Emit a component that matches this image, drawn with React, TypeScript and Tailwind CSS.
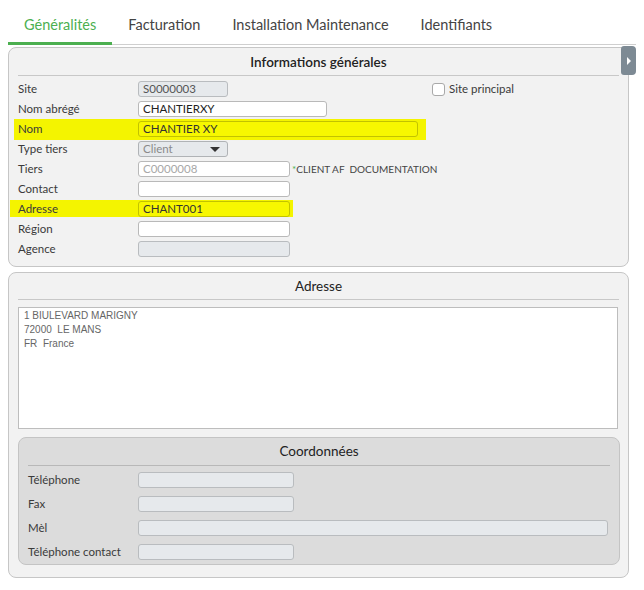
import React from 'react';

type FieldRow = {
  label: string;
  value?: string;
  width: number;
  kind?: 'readonly' | 'input' | 'placeholder' | 'highlight';
};

const tabs = ['Généralités', 'Facturation', 'Installation Maintenance', 'Identifiants'];

const Input: React.FC<{ value?: string; width: number; kind?: FieldRow['kind'] }> = ({
  value,
  width,
  kind = 'input',
}) => {
  const styles: Record<string, string> = {
    readonly: 'bg-[#e6e9ec] border-[#b9bcbf] text-[#555]',
    input: 'bg-white border-[#b9b9b9] text-[#222]',
    placeholder: 'bg-white border-[#b9b9b9] text-[#a8a8a8]',
    highlight: 'bg-[#f7f700] border-[#c2c200] text-[#333]',
  };
  return (
    <div
      className={`flex h-[16px] items-center rounded-[3px] border px-[4px] text-[11.5px] leading-none ${styles[kind]}`}
      style={{ width }}
    >
      {value}
    </div>
  );
};

const App: React.FC = () => {
  return (
    <div className="relative h-[590px] w-full bg-white font-['Lato',sans-serif] text-[#333]">
      {/* Tabs */}
      <div className="ml-2 mr-2 flex border-b border-[#cfcfcf]">
        {tabs.map((tab, i) => (
          <div
            key={tab}
            className={`-mb-px px-4 pt-[15px] pb-[7px] text-[14.5px] leading-[20px] border-b-[3px] ${
              i === 0 ? 'border-[#4caf50] text-[#4caf50]' : 'border-transparent text-[#444]'
            }`}
          >
            {tab}
          </div>
        ))}
      </div>

      {/* side toggle */}
      <div className="absolute left-[621px] top-[46px] flex h-[29px] w-[15px] items-center justify-center rounded-l-[3px] rounded-r-[4px] bg-[#7d8a94]">
        <div className="h-0 w-0 border-y-[4px] border-l-[4px] border-y-transparent border-l-white" />
      </div>

      {/* Informations générales */}
      <div className="ml-2 mr-[15px] mt-[2px] rounded-[8px] border border-[#c6c6c6] bg-[#f2f2f2] px-[9px] pb-[7px]">
        <div className="flex h-[27px] items-center justify-center pt-[1px] text-[13.5px] font-semibold text-[#222]">
          Informations générales
        </div>
        <div className="border-b border-[#c8c8c8]" />
        <div className="mt-[3px] flex flex-col text-[11.5px] text-[#3a3a3a]">
          {/* Site */}
          <div className="flex h-[20px] items-center">
            <div className="w-[120px]">Site</div>
            <Input value="S0000003" width={90} kind="readonly" />
            <div className="ml-[204px] flex items-center gap-[4px]">
              <div className="h-[13px] w-[13px] rounded-[3px] border border-[#a9a9a9] bg-white" />
              <span>Site principal</span>
            </div>
          </div>
          <div className="flex h-[20px] items-center">
            <div className="w-[120px]">Nom abrégé</div>
            <Input value="CHANTIERXY" width={189} />
          </div>
          <div className="relative flex h-[20px] items-center">
            <div className="absolute left-[-4px] top-0 h-[21px] w-[412px] bg-[#f4f400]" />
            <div className="relative w-[120px]">Nom</div>
            <div className="relative">
              <Input value="CHANTIER XY" width={280} kind="highlight" />
            </div>
          </div>
          <div className="flex h-[20px] items-center">
            <div className="w-[120px]">Type tiers</div>
            <div className="flex h-[16px] w-[90px] items-center justify-between rounded-[3px] border border-[#b0b3b6] bg-[#e6e9ec] pl-[4px] pr-[7px] text-[11.5px] text-[#8a8a8a]">
              <span>Client</span>
              <div className="h-0 w-0 border-x-[5px] border-t-[5px] border-x-transparent border-t-[#333]" />
            </div>
          </div>
          <div className="flex h-[20px] items-center">
            <div className="w-[120px]">Tiers</div>
            <Input value="C0000008" width={152} kind="placeholder" />
            <span className="ml-[2px] text-[10px] text-[#444]">
              <span className="text-[#4caf50]">*</span>CLIENT AF&nbsp; DOCUMENTATION
            </span>
          </div>
          <div className="flex h-[20px] items-center">
            <div className="w-[120px]">Contact</div>
            <Input width={152} />
          </div>
          <div className="relative flex h-[20px] items-center">
            <div className="absolute left-[-8px] top-[1px] h-[17px] w-[283px] bg-[#f4f400]" />
            <div className="relative w-[120px]">Adresse</div>
            <div className="relative">
              <Input value="CHANT001" width={152} kind="highlight" />
            </div>
          </div>
          <div className="flex h-[20px] items-center">
            <div className="w-[120px]">Région</div>
            <Input width={152} />
          </div>
          <div className="flex h-[20px] items-center">
            <div className="w-[120px]">Agence</div>
            <Input width={152} kind="readonly" />
          </div>
        </div>
      </div>

      {/* Adresse */}
      <div className="ml-2 mr-[15px] mt-[5px] rounded-[8px] border border-[#c6c6c6] bg-[#f2f2f2] px-[9px] pb-[12px]">
        <div className="flex h-[26px] items-center justify-center text-[13.5px] text-[#222]">
          Adresse
        </div>
        <div className="border-b border-[#c8c8c8]" />
        <div className="mt-[7px] mr-[1px] h-[122px] border border-[#bdbdbd] bg-white px-[5px] pt-[1px] font-['Liberation_Sans',sans-serif] text-[10px] leading-[14px] text-[#666]">
          <div>1 BIULEVARD MARIGNY</div>
          <div>72000&nbsp; LE MANS</div>
          <div>FR&nbsp; France</div>
        </div>

        {/* Coordonnées */}
        <div className="-mr-[1px] mt-[8px] rounded-[8px] border border-[#c4c4c4] bg-[#dcdcdc] px-[9px]">
          <div className="flex h-[27px] items-center justify-center text-[13.5px] text-[#222]">
            Coordonnées
          </div>
          <div className="border-b border-[#b8b8b8]" />
          <div className="mt-[2px] flex flex-col text-[11.5px] text-[#3a3a3a]">
            {[
              { label: 'Téléphone', width: 156 },
              { label: 'Fax', width: 156 },
              { label: 'Mèl', width: 470 },
              { label: 'Téléphone contact', width: 156 },
            ].map((row) => (
              <div key={row.label} className="flex h-[24px] items-center">
                <div className="w-[110px]">{row.label}</div>
                <Input width={row.width} kind="readonly" />
              </div>
            ))}
          </div>
        </div>
      </div>
    </div>
  );
};

export default App;
